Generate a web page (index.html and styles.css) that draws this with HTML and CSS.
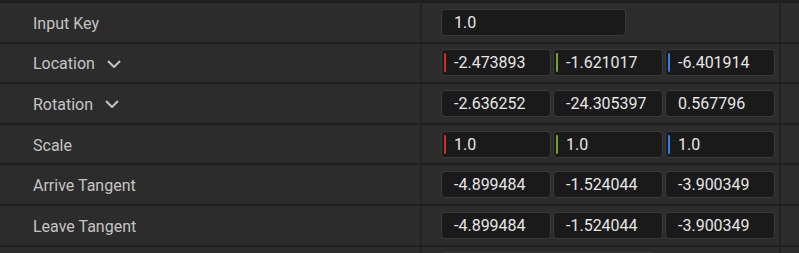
FILE: index.html
```html
<!DOCTYPE html>
<html lang="en">
<head>
    <meta charset="UTF-8">
    <title>Spline Point Details</title>
    <link rel="stylesheet" href="styles.css">
</head>
<body>
    <div class="details">
        <div class="row">
            <div class="name">Input Key</div>
            <div class="value">
                <div class="field single">1.0</div>
            </div>
            <div class="extra"></div>
        </div>

        <div class="row">
            <div class="name">Location <svg class="chevron" width="14" height="8" viewBox="0 0 14 8"><polyline points="1,1 7,7 13,1"/></svg></div>
            <div class="value">
                <div class="field axis"><span class="bar x"></span>-2.473893</div>
                <div class="field axis"><span class="bar y"></span>-1.621017</div>
                <div class="field axis"><span class="bar z"></span>-6.401914</div>
            </div>
            <div class="extra"></div>
        </div>

        <div class="row">
            <div class="name">Rotation <svg class="chevron" width="14" height="8" viewBox="0 0 14 8"><polyline points="1,1 7,7 13,1"/></svg></div>
            <div class="value">
                <div class="field">-2.636252</div>
                <div class="field">-24.305397</div>
                <div class="field">0.567796</div>
            </div>
            <div class="extra"></div>
        </div>

        <div class="row">
            <div class="name">Scale</div>
            <div class="value">
                <div class="field axis"><span class="bar x"></span>1.0</div>
                <div class="field axis"><span class="bar y"></span>1.0</div>
                <div class="field axis"><span class="bar z"></span>1.0</div>
            </div>
            <div class="extra"></div>
        </div>

        <div class="row">
            <div class="name">Arrive Tangent</div>
            <div class="value">
                <div class="field">-4.899484</div>
                <div class="field">-1.524044</div>
                <div class="field">-3.900349</div>
            </div>
            <div class="extra"></div>
        </div>

        <div class="row">
            <div class="name">Leave Tangent</div>
            <div class="value">
                <div class="field">-4.899484</div>
                <div class="field">-1.524044</div>
                <div class="field">-3.900349</div>
            </div>
            <div class="extra"></div>
        </div>

        <div class="row">
            <div class="name"></div>
            <div class="value">
                <div class="field wide"></div>
            </div>
            <div class="extra"></div>
        </div>
    </div>
</body>
</html>
```

FILE: styles.css
```css
body {
    margin: 0;
    background: #2c2c2c;
    font-family: Roboto, "Liberation Sans", sans-serif;
    font-size: 16px;
    overflow: hidden;
}
.details {
    display: flex;
    flex-direction: column;
    border-top: 3px solid #1f1f1f;
}
.row {
    display: flex;
    flex-shrink: 0;
    height: 40.6px;
    box-sizing: border-box;
    border-bottom: 2px solid #1f1f1f;
    background: #2c2c2c;
}
.name {
    width: 422px;
    flex-shrink: 0;
    box-sizing: border-box;
    padding: 2px 0 0 33px;
    display: flex;
    align-items: center;
    gap: 12px;
    color: #c4c4c4;
    border-right: 2px solid #222;
}
.chevron {
    fill: none;
    stroke: #c4c4c4;
    stroke-width: 2;
}
.value {
    width: 359px;
    flex-shrink: 0;
    box-sizing: border-box;
    padding-left: 19px;
    display: flex;
    align-items: center;
    gap: 2px;
    border-right: 2px solid #222;
}
.extra {
    flex: 1;
}
.field {
    width: 110px;
    height: 27px;
    box-sizing: border-box;
    display: flex;
    align-items: center;
    padding-left: 12px;
    background: #1a1a1a;
    border: 1px solid #393939;
    border-radius: 4px;
    color: #e6e6e6;
    white-space: nowrap;
}
.field.axis {
    padding-left: 2px;
}
.field.single {
    width: 185px;
}
.field.wide {
    width: 214px;
}
.bar {
    width: 2px;
    height: 19px;
    margin-right: 8px;
    border-radius: 1px;
}
.bar.x { background: #cf321a; }
.bar.y { background: #6ca62a; }
.bar.z { background: #2d80ea; }
```
